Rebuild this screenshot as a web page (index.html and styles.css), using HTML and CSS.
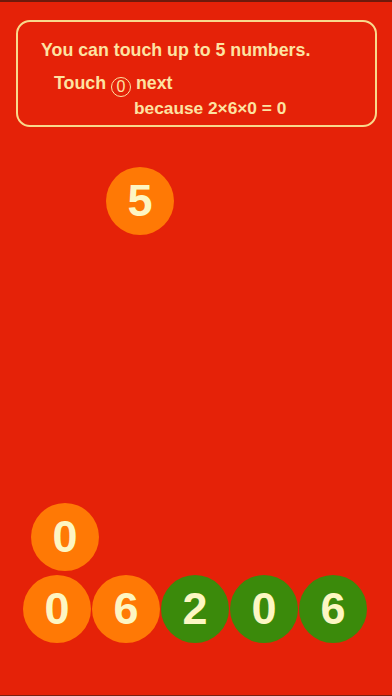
FILE: index.html
```html
<!DOCTYPE html>
<html lang="en">
  <head>
    <meta charset="UTF-8" />
    <meta name="viewport" content="width=device-width, initial-scale=1.0" />
    <title>Touch Numbers</title>
    <link rel="stylesheet" href="styles.css">
  </head>
  <body>
    <!-- Hint card -->
    <div class="hint-card">
      <p class="hint-title">You can touch up to 5 numbers.</p>
      <p class="hint-next">Touch <span class="circled">0</span> next</p>
      <p class="hint-reason">because 2×6×0 = 0</p>
    </div>

    <!-- Play field -->
    <div class="field">
      <div class="ball ball-orange floating">5</div>
    </div>

    <!-- Number tray -->
    <div class="tray">
      <div class="stack">
        <div class="ball ball-orange stacked">0</div>
        <div class="ball ball-orange">0</div>
      </div>
      <div class="stack"><div class="ball ball-orange">6</div></div>
      <div class="stack"><div class="ball ball-green">2</div></div>
      <div class="stack"><div class="ball ball-green">0</div></div>
      <div class="stack"><div class="ball ball-green">6</div></div>
    </div>
  </body>
</html>
```

FILE: styles.css
```css
/* Base */
html, body { margin: 0; height: 100%; }
body { box-sizing: border-box; height: 696px; overflow: hidden; background-color: #e52208; border-top: 2px solid #6e1a0c; border-bottom: 1px solid #7a2010; display: flex; flex-direction: column; font-family: "Liberation Sans", Arial, sans-serif; color: #fde3a2; }

/* Hint card */
.hint-card { margin: 18px 15px 0 16px; height: 107px; box-sizing: border-box; border: 2px solid #f9d98c; border-radius: 14px; padding: 18px 0 0 23px; }
.hint-card p { margin: 0; font-weight: bold; font-size: 17.8px; line-height: 21px; }
.hint-next { margin-top: 12px !important; padding-left: 13px; }
.hint-reason { margin-top: 1px !important; padding-left: 93px; font-size: 17.3px !important; }
.circled { display: inline-block; width: 20px; height: 20px; box-sizing: border-box; border: 1.5px solid #fde3a2; border-radius: 50%; font-size: 16px; line-height: 17px; text-align: center; font-weight: normal; vertical-align: -3px; }

/* Play field */
.field { flex: 1; position: relative; }
.floating { position: absolute; left: 106px; top: 40px; }

/* Balls */
.ball { width: 68px; height: 68px; border-radius: 50%; display: flex; justify-content: center; align-items: center; font-size: 45px; font-weight: bold; color: #fdf6c3; }
.ball-orange { background-color: #ff7905; }
.ball-green { background-color: #3b8a0b; }

/* Tray */
.tray { display: flex; align-items: flex-end; padding: 0 0 52px 23px; }
.stack { width: 69px; display: flex; flex-direction: column; gap: 4px; }
.stacked { margin-left: 8px; }
```
